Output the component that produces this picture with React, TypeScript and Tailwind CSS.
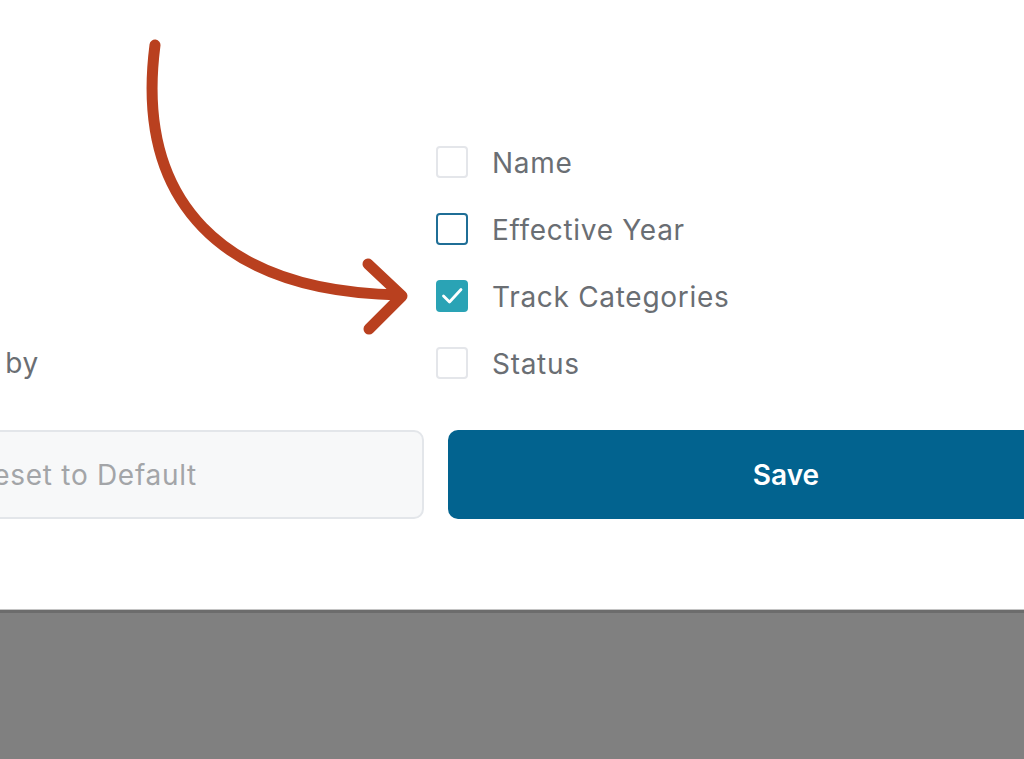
import { useState } from "react";

const FONT = { fontFamily: "Inter, 'Noto Sans', sans-serif" };

type Field = { key: string; label: string; state: "idle" | "focus" | "checked" };

const FIELDS: Field[] = [
  { key: "name", label: "Name", state: "idle" },
  { key: "year", label: "Effective Year", state: "focus" },
  { key: "track", label: "Track Categories", state: "checked" },
  { key: "status", label: "Status", state: "idle" },
];

function Box({ state }: { state: Field["state"] }) {
  if (state === "checked") {
    return (
      <span className="flex h-8 w-8 shrink-0 items-center justify-center rounded-[4px] bg-[#2aa3b5]">
        <svg width="32" height="32" viewBox="0 0 32 32" fill="none" stroke="white" strokeWidth="2.8" strokeLinecap="round" strokeLinejoin="round">
          <path d="M7.5 16 L13.5 22 L25 9.5" />
        </svg>
      </span>
    );
  }
  return (
    <span
      className={
        state === "focus"
          ? "h-8 w-8 shrink-0 rounded-[4px] border-2 border-[#1f6e96] bg-white"
          : "h-8 w-8 shrink-0 rounded-[4px] border-2 border-[#e4e6ea] bg-white"
      }
    />
  );
}

export default function App() {
  const [fields] = useState(FIELDS);

  return (
    <div className="relative h-[759px] w-[1024px] overflow-hidden bg-[#808080]" style={FONT}>
      <div className="h-[609px] bg-white">
        <div className="flex items-end pt-[146px]">
          <div className="flex w-[39px] justify-end">
            <span className="whitespace-nowrap text-[28px] leading-[32px] tracking-[0.7px] text-[#6a6e73]">Sort by</span>
          </div>
          <div className="ml-[397px] flex flex-col gap-[35px]">
            {fields.map((f) => (
              <label key={f.key} className="flex h-8 items-center gap-6">
                <Box state={f.state} />
                <span className="mt-[2px] whitespace-nowrap text-[28px] leading-8 tracking-[0.7px] text-[#6a6e73]">{f.label}</span>
              </label>
            ))}
          </div>
        </div>

        <div className="ml-[-252px] mt-[51px] flex gap-6">
          <button className="flex h-[89px] w-[676px] shrink-0 items-center justify-center rounded-[10px] border-2 border-[#e3e6ea] bg-[#f7f8f9] text-[28px] tracking-[0.7px] text-[#a3a5a8]">
            Reset to Default
          </button>
          <button className="flex h-[89px] w-[676px] shrink-0 items-center justify-center rounded-[10px] bg-[#02638f] text-[28px] font-semibold text-white">
            Save
          </button>
        </div>
      </div>
      <div className="h-[1px] bg-[#c4c4c4]" />
      <div className="h-[3px] bg-[#6c6c6c]" />

      <svg className="pointer-events-none absolute left-0 top-0" width="1024" height="759" fill="none" stroke="#b9401f" strokeWidth="11" strokeLinecap="round" strokeLinejoin="round">
        <path d="M155 45 C 135 200, 220 292, 400 295" />
        <path d="M368 264 L 402 296 L 369 329" />
      </svg>
    </div>
  );
}
